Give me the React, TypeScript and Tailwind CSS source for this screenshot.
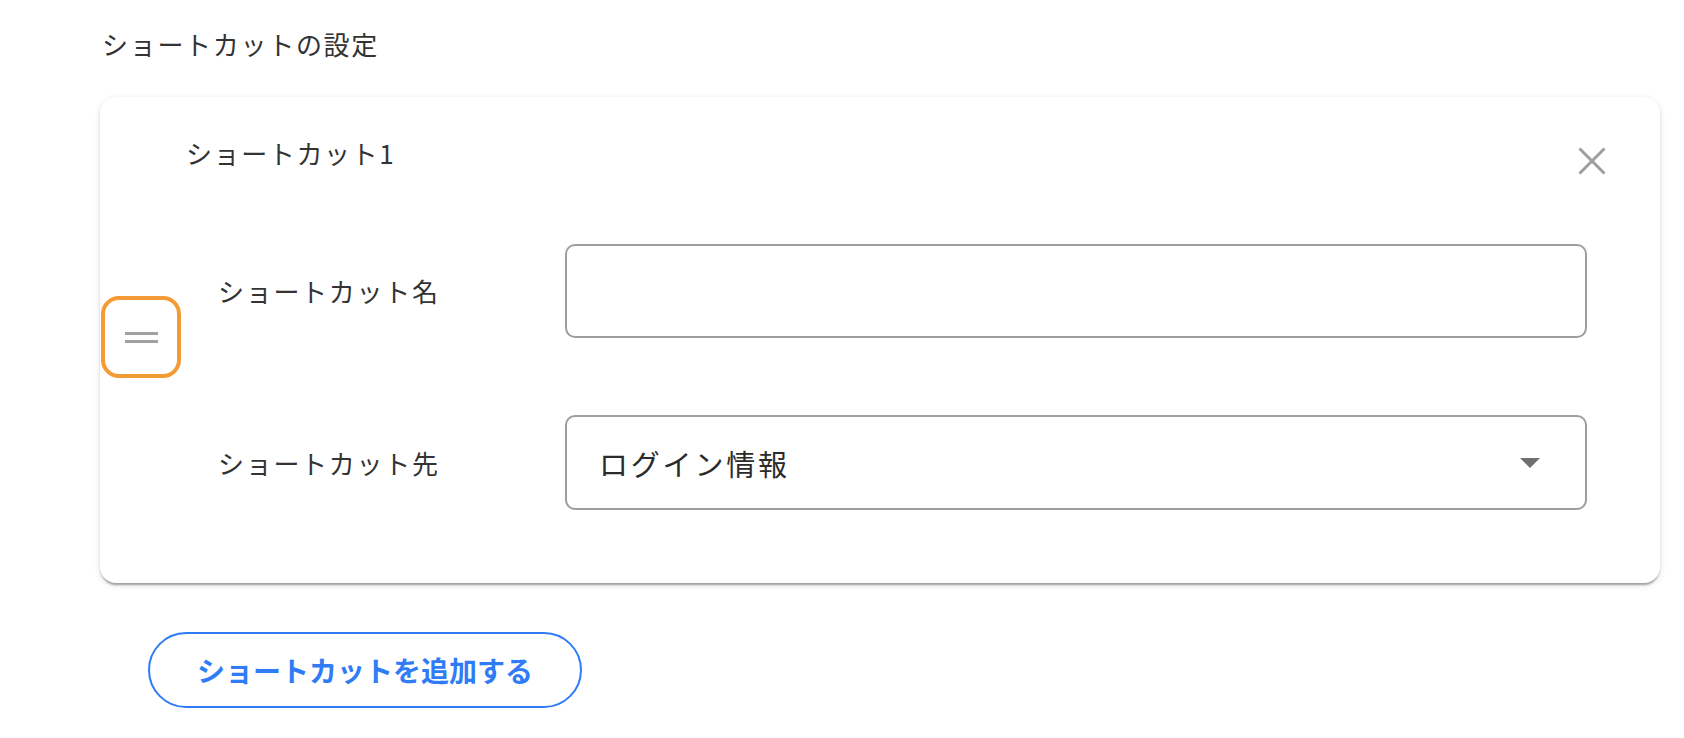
import React from "react";

const font = { fontFamily: '"Noto Sans CJK JP", "Noto Sans", sans-serif' };

export default function App() {
  return (
    <div className="min-h-[738px] w-[1684px] bg-white pt-[26px] text-[#333333]" style={font}>
      <div className="ml-[102px] text-[26px] leading-[36px] tracking-[1.7px]">ショートカットの設定</div>

      <div className="ml-[100px] mt-[35px] w-[1560px] rounded-[16px] bg-white pb-[73px] shadow-[0_4px_2px_-2px_rgba(0,0,0,0.2),0_2px_2px_0_rgba(0,0,0,0.14),0_2px_6px_0_rgba(0,0,0,0.12)]">
        <div className="flex items-start justify-between pl-[86px] pr-[48px] pt-[38px]">
          <div className="text-[26px] leading-[36px] tracking-[1.6px]">ショートカット1</div>
          <button className="mt-[6px] flex h-[40px] w-[40px] items-center justify-center">
            <svg width="28" height="28" viewBox="0 0 28 28">
              <line x1="1.5" y1="1.5" x2="26.5" y2="26.5" stroke="#9e9e9e" strokeWidth="3" />
              <line x1="26.5" y1="1.5" x2="1.5" y2="26.5" stroke="#9e9e9e" strokeWidth="3" />
            </svg>
          </button>
        </div>

        <div className="mt-[63px] flex">
          <div className="w-[118px] pl-[1px] pt-[52px]">
            <div className="flex h-[82px] w-[80px] flex-col items-center justify-center gap-[5px] rounded-[18px] border-4 border-[#f59b36]">
              <div className="h-[3px] w-[33px] bg-[#a0a0a0]" />
              <div className="h-[3px] w-[33px] bg-[#a0a0a0]" />
            </div>
          </div>

          <div className="flex flex-1 flex-col gap-[77px] pr-[73px]">
            <div className="flex items-center">
              <div className="w-[347px] text-[26px] leading-[36px] tracking-[1.7px]">ショートカット名</div>
              <div className="h-[94px] flex-1 rounded-[10px] border-2 border-[#9e9e9e]" />
            </div>
            <div className="flex items-center">
              <div className="w-[347px] text-[26px] leading-[36px] tracking-[1.7px]">ショートカット先</div>
              <div className="flex h-[95px] flex-1 items-center justify-between rounded-[10px] border-2 border-[#9e9e9e] pl-[32px] pr-[45px]">
                <span className="text-[29px] leading-[36px] tracking-[2.8px] text-[#2b2b2b]">ログイン情報</span>
                <svg width="20" height="10" viewBox="0 0 20 10">
                  <polygon points="0,0 20,0 10,10" fill="#6f6f6f" />
                </svg>
              </div>
            </div>
          </div>
        </div>
      </div>

      <button className="ml-[148px] mt-[49px] flex h-[76px] w-[434px] items-center justify-center rounded-full border-2 border-[#2f7cf6] text-[28px] font-bold tracking-[0px] text-[#2f7cf6]">
        ショートカットを追加する
      </button>
    </div>
  );
}
